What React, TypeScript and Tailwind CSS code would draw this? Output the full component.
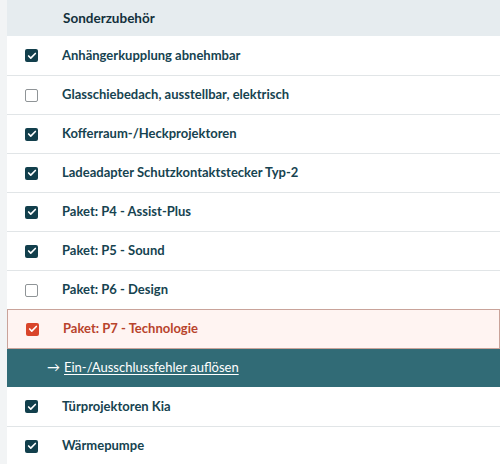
import { Check } from "lucide-react";

type Item = { label: string; checked: boolean; error?: boolean };

const items: Item[] = [
  { label: "Anhängerkupplung abnehmbar", checked: true },
  { label: "Glasschiebedach, ausstellbar, elektrisch", checked: false },
  { label: "Kofferraum-/Heckprojektoren", checked: true },
  { label: "Ladeadapter Schutzkontaktstecker Typ-2", checked: true },
  { label: "Paket: P4 - Assist-Plus", checked: true },
  { label: "Paket: P5 - Sound", checked: true },
  { label: "Paket: P6 - Design", checked: false },
  { label: "Paket: P7 - Technologie", checked: true, error: true },
  { label: "Türprojektoren Kia", checked: true },
  { label: "Wärmepumpe", checked: true },
];

function Box({ checked, error }: { checked: boolean; error?: boolean }) {
  if (!checked) {
    return <span className="block shrink-0 w-[13px] h-[13px] rounded-[2px] border border-[#8f9497] bg-white" />;
  }
  return (
    <span
      className={`flex shrink-0 items-center justify-center w-[13px] h-[13px] rounded-[2px] ${error ? "bg-[#d9452b]" : "bg-[#123f4c]"}`}
    >
      <Check className="w-[10px] h-[10px] text-white" strokeWidth={4} />
    </span>
  );
}

export default function App() {
  return (
    <div className="w-[500px] h-[464px] overflow-hidden bg-[#f2f4f5] pl-[7px]" style={{ fontFamily: "Lato, 'Open Sans', sans-serif" }}>
      <div className="bg-white">
        {/* Header */}
        <div className="h-[36px] bg-[#e6ecef] flex items-center pl-[56px] text-[13.5px] font-bold text-[#13303b]">
          Sonderzubehör
        </div>

        {items.map((item, i) => (
          <div key={item.label}>
            {item.error ? (
              <>
                <div className="h-[40px] flex items-center gap-[24px] pl-[18px] bg-[#fff4f2] border border-[#c9a39a] text-[13px] font-bold text-[#b8432c]">
                  <Box checked={item.checked} error />
                  {item.label}
                </div>
                <div className="h-[38px] flex items-center pl-[40px] bg-[#316b76] text-[13px] text-white gap-[4px]">
                  <span>→</span>
                  <a href="#" className="underline underline-offset-2">Ein-/Ausschlussfehler auflösen</a>
                </div>
              </>
            ) : (
              <div
                className={`h-[39px] flex items-center gap-[24px] pl-[18px] text-[13px] font-bold text-[#164350] ${
                  i > 0 && !items[i - 1].error ? "border-t border-[#e1e5e7]" : ""
                }`}
              >
                <Box checked={item.checked} />
                {item.label}
              </div>
            )}
          </div>
        ))}
      </div>
    </div>
  );
}
